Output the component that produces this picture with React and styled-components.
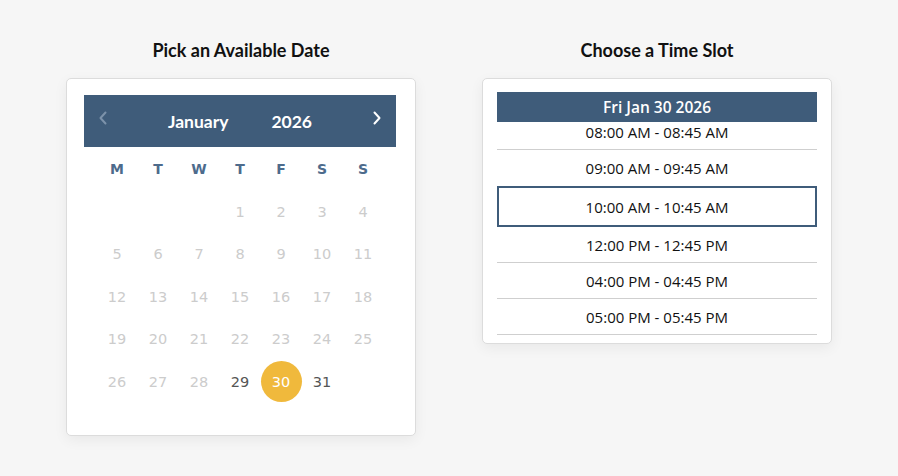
import React from "react";
import styled, { createGlobalStyle } from "styled-components";

const GlobalStyle = createGlobalStyle`
  * { box-sizing: border-box; }
  html, body { margin: 0; padding: 0; background: #f6f6f6; }
  body { font-family: "Open Sans", sans-serif; }
`;

const Page = styled.div`
  width: 898px;
  height: 476px;
  display: flex;
  justify-content: center;
  align-items: flex-start;
  gap: 66px;
  padding-top: 39px;
`;

const Column = styled.div`
  width: 350px;
  display: flex;
  flex-direction: column;
  align-items: stretch;
`;

const Title = styled.h2`
  margin: 0 0 17px;
  text-align: center;
  font-family: "Lato", sans-serif;
  font-weight: 700;
  font-size: 18px;
  line-height: 22px;
  color: #111;
`;

const Card = styled.div`
  background: #fff;
  border: 1px solid #dcdcdc;
  border-radius: 5px;
  box-shadow: 0 4px 14px rgba(0, 0, 0, 0.06);
  padding: ${({ $pad }) => $pad};
`;

const CalHeader = styled.div`
  height: 52px;
  background: #3f5c7a;
  display: flex;
  align-items: center;
  justify-content: space-between;
  padding: 0 12px 6px;
`;

const Arrow = styled.button`
  border: 0;
  background: none;
  padding: 0;
  width: 14px;
  height: 16px;
  display: flex;
  align-items: center;
  justify-content: center;
  color: ${({ $disabled }) => ($disabled ? "#7c92aa" : "#fff")};
`;

const MonthYear = styled.div`
  display: flex;
  gap: 43px;
  font-family: "Lato", sans-serif;
  font-weight: 700;
  font-size: 17.5px;
  color: #fff;
  padding-top: 7px;
`;

const Grid = styled.div`
  width: 287px;
  margin: 1px auto 0;
  display: grid;
  grid-template-columns: repeat(7, 41px);
  grid-auto-rows: 42.5px;
`;

const DayName = styled.div`
  display: flex;
  align-items: center;
  justify-content: center;
  font-family: "DejaVu Sans", Verdana, sans-serif;
  font-weight: 700;
  font-size: 14px;
  color: #4d6b8c;
`;

const Day = styled.div`
  display: flex;
  align-items: center;
  justify-content: center;
  font-family: "DejaVu Sans", Verdana, sans-serif;
  font-size: 14.5px;
  color: ${({ $state }) =>
    $state === "selected" ? "#fff" : $state === "open" ? "#555" : "#cccccc"};

  & > span {
    width: 41px;
    height: 41px;
    border-radius: 50%;
    display: flex;
    align-items: center;
    justify-content: center;
    background: ${({ $state }) => ($state === "selected" ? "#f0b93c" : "transparent")};
  }
`;

const SlotHeader = styled.div`
  height: 30px;
  background: #3f5c7a;
  color: #fff;
  display: flex;
  align-items: center;
  justify-content: center;
  font-family: "Open Sans", sans-serif;
  font-weight: 600;
  font-size: 15.5px;
  position: relative;
  z-index: 1;
`;

const SlotList = styled.div`
  margin-top: -8px;
`;

const Slot = styled.div`
  height: ${({ $selected }) => ($selected ? "41px" : "36px")};
  display: flex;
  align-items: center;
  justify-content: center;
  font-family: "Open Sans", sans-serif;
  font-size: 15px;
  color: #111;
  border: ${({ $selected }) => ($selected ? "2px solid #3f5c7a" : "0")};
  border-bottom: ${({ $selected, $noLine }) =>
    $selected ? "2px solid #3f5c7a" : $noLine ? "0" : "1px solid #cfcfcf"};
`;

const Chevron = ({ dir }) => (
  <svg width="10" height="14" viewBox="0 0 10 14" fill="none">
    <path
      d={dir === "left" ? "M7.5 1.5 L2.5 7 L7.5 12.5" : "M2.5 1.5 L7.5 7 L2.5 12.5"}
      stroke="currentColor"
      strokeWidth="2"
      strokeLinecap="round"
      strokeLinejoin="round"
    />
  </svg>
);

const dayNames = ["M", "T", "W", "T", "F", "S", "S"];

const slots = [
  { label: "08:00 AM - 08:45 AM" },
  { label: "09:00 AM - 09:45 AM", noLine: true },
  { label: "10:00 AM - 10:45 AM", selected: true },
  { label: "12:00 PM - 12:45 PM" },
  { label: "04:00 PM - 04:45 PM" },
  { label: "05:00 PM - 05:45 PM" },
];

const App = () => {
  const cells = [];
  for (let i = 0; i < 3; i++) cells.push(null);
  for (let d = 1; d <= 31; d++) cells.push(d);

  const stateOf = (d) => (d === 30 ? "selected" : d === 29 || d === 31 ? "open" : "off");

  return (
    <>
      <GlobalStyle />
      <Page>
        <Column>
          <Title>Pick an Available Date</Title>
          <Card $pad="16px 19px 32px 17px">
            <CalHeader>
              <Arrow $disabled>
                <Chevron dir="left" />
              </Arrow>
              <MonthYear>
                <span>January</span>
                <span>2026</span>
              </MonthYear>
              <Arrow>
                <Chevron dir="right" />
              </Arrow>
            </CalHeader>
            <Grid>
              {dayNames.map((n, i) => (
                <DayName key={i}>{n}</DayName>
              ))}
              {cells.map((d, i) =>
                d === null ? (
                  <Day key={i} />
                ) : (
                  <Day key={i} $state={stateOf(d)}>
                    <span>{d}</span>
                  </Day>
                )
              )}
            </Grid>
          </Card>
        </Column>
        <Column>
          <Title>Choose a Time Slot</Title>
          <Card $pad="13px 14px 8px 14px">
            <SlotHeader>Fri Jan 30 2026</SlotHeader>
            <SlotList>
              {slots.map((s, i) => (
                <Slot key={i} $selected={s.selected} $noLine={s.noLine}>
                  {s.label}
                </Slot>
              ))}
            </SlotList>
          </Card>
        </Column>
      </Page>
    </>
  );
};

export default App;
